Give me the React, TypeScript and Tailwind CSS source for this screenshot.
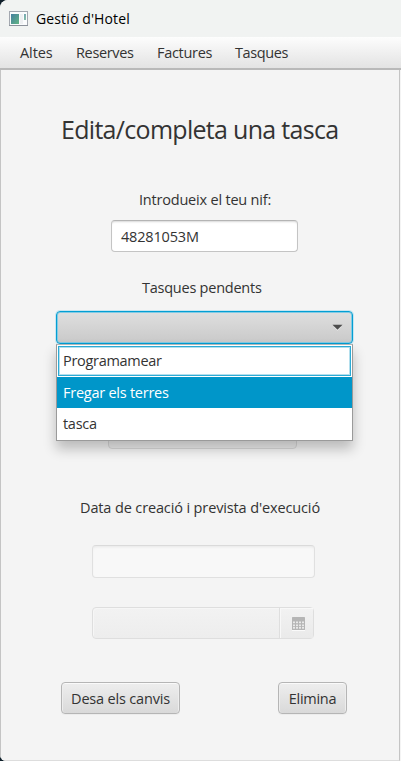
import React from "react";

const menus = [
  { label: "Altes", className: "w-[56px] tracking-[-0.1px]" },
  { label: "Reserves", className: "w-[81px] tracking-[-0.35px]" },
  { label: "Factures", className: "w-[78px] tracking-[-0.3px]" },
  { label: "Tasques", className: "tracking-[-0.4px]" },
];

function WindowIcon() {
  return (
    <svg width="19" height="16" viewBox="0 0 19 16" shapeRendering="crispEdges">
      <defs>
        <linearGradient id="pane" x1="0" y1="0" x2="1" y2="1">
          <stop offset="0" stopColor="#4580a0" />
          <stop offset="1" stopColor="#62b584" />
        </linearGradient>
      </defs>
      <rect x="0.5" y="0.5" width="18" height="14" fill="#fbfcfd" stroke="#a3a8b0" />
      <rect x="0" y="14" width="19" height="1" fill="#8c929b" />
      <rect x="2" y="3" width="8" height="10" fill="url(#pane)" />
      <rect x="11" y="3" width="3" height="10" fill="#eef0f2" />
      <rect x="15" y="3" width="2" height="6" fill="url(#pane)" opacity="0.75" />
    </svg>
  );
}

function CalendarIcon() {
  const cols = [1.5, 4.5, 7.5, 10.5];
  const rows = [4.5, 7.5, 10];
  return (
    <svg width="13" height="14" viewBox="0 0 13 14">
      <rect x="0" y="1" width="13" height="13" fill="#fafafa" />
      <rect x="0" y="0" width="13" height="13" rx="0.6" fill="#b5b5b5" />
      {rows.map((y) =>
        cols.map((x) => <rect key={`${x}-${y}`} x={x - 0.5} y={y} width="2" height="1.7" fill="#e9e9e9" />)
      )}
    </svg>
  );
}

function Button({ children, className }: { children: React.ReactNode; className: string }) {
  return (
    <button
      className={`h-8 rounded-[4px] border border-[#b5b5b5] bg-linear-to-b from-[#eeeeee] to-[#d9d9d9] pt-px text-center leading-[30px] whitespace-nowrap shadow-[inset_0_1px_0_#fafafa,inset_1px_0_0_#ededed,inset_-1px_0_0_#ededed,0_1px_0_#ececec] ${className}`}
    >
      {children}
    </button>
  );
}

export default function App() {
  return (
    <div className="h-[761px] w-[401px] overflow-hidden bg-[#10202b] font-['Open_Sans','Noto_Sans',sans-serif] text-[14.5px] text-[#333333]">
      <div className="flex h-[761px] flex-col overflow-hidden rounded-tl-[8px] rounded-bl-[6px] bg-[#f4f4f4]">
        <header className="flex h-[37px] shrink-0 items-center bg-[#f1f3f2] pl-[9px] text-black">
          <WindowIcon />
          <span className="ml-2 text-[14px] leading-[36px] tracking-[0.13px] whitespace-nowrap">Gestió d'Hotel</span>
        </header>
        <nav className="flex h-[33px] shrink-0 border-b-2 border-[#b9b9b9] bg-linear-to-b from-[#fdfdfd] to-[#e3e3e3] pl-5 leading-[31px]">
          {menus.map((m) => (
            <span key={m.label} className={m.className}>{m.label}</span>
          ))}
        </nav>
        <main className="mr-px flex flex-1 flex-col border-x border-b border-x-[#c4c4c4] border-b-[#dddddd]">
          <h1 className="mt-[39px] ml-[60px] h-[41px] text-[25px] leading-10 tracking-[-0.7px] whitespace-nowrap">Edita/completa una tasca</h1>
          <label className="mt-10 ml-[138px] h-5 leading-5 tracking-[-0.2px] whitespace-nowrap">Introdueix el teu nif:</label>
          <div className="mt-[10px] ml-[110px] h-8 w-[187px] rounded-[4px] border border-[#c4c4c4] border-t-[#b4b4b4] bg-white pt-px pl-[9px] leading-[30px] tracking-[-0.17px] shadow-[inset_0_2px_2px_-1px_#d8d8d8]">48281053M</div>
          <label className="mt-[26px] ml-[141px] h-5 leading-5 tracking-[-0.24px] whitespace-nowrap">Tasques pendents</label>

          <div className="relative mt-[13px] ml-[55px] h-[33px] w-[297px]">
            <div className="flex h-full items-center justify-end rounded-[4px] border border-[#039ed3] bg-linear-to-b from-[#dfdfdf] to-[#c9c9c9] pr-[9px] shadow-[0_0_0_1px_#c7e6f1,inset_0_0_0_1px_#83cbe4]">
              <svg width="11" height="7" viewBox="0 0 11 7">
                <path d="M2 3 5.5 6.7 9 3Z" fill="#eeeeee" />
                <path d="M0.5 0.7H10.5L5.5 5.7Z" fill="#4d4d4d" />
              </svg>
            </div>
            <ul className="absolute top-[33px] left-0 z-10 h-[97px] w-[297px] border border-[#9a9a9a] border-t-[#b5b5b5] bg-white pt-px shadow-[0_8px_12px_0_rgba(0,0,0,0.24)]">
              <li className="mx-px h-[30px] border border-[#2cabd5] pl-1 leading-[28px] tracking-[-0.3px] shadow-[inset_0_0_0_1px_#b4dfed]">Programamear</li>
              <li className="mt-px h-[31px] bg-[#0096c9] pl-[6px] leading-[31px] tracking-[-0.25px] text-white">Fregar els terres</li>
              <li className="h-[31px] pl-[6px] leading-[31px] tracking-[-0.3px]">tasca</li>
            </ul>
          </div>

          <div className="mt-[73px] ml-[107px] h-8 w-[189px] rounded-[4px] border border-[#d9d9d9] bg-[#eeeeee]" />
          <label className="mt-[49px] ml-[79px] h-5 leading-5 tracking-[-0.13px] whitespace-nowrap">Data de creació i prevista d'execució</label>
          <div className="mt-[27px] ml-[91px] h-[33px] w-[223px] rounded-[4px] border border-[#e0e0e0] border-t-[#dadada] bg-[#f8f8f8] shadow-[inset_0_2px_3px_-1px_#e7e7e7]" />
          <div className="mt-[29px] ml-[91px] flex h-8 w-[222px] rounded-[4px] border border-[#dedede] bg-linear-to-b from-[#f2f2f2] to-[#ededed] shadow-[inset_1px_1px_0_#f6f6f6]">
            <div className="w-[186px]" />
            <div className="flex flex-1 items-center justify-center border-l border-[#dedede] bg-linear-to-b from-[#f2f2f2] to-[#eaeaea] pt-px pl-[3px] shadow-[inset_1px_1px_0_#f8f8f8]">
              <CalendarIcon />
            </div>
          </div>
          <div className="mt-[43px] ml-[60px] flex w-[286px] justify-between">
            <Button className="w-[119px] tracking-[-0.18px]">Desa els canvis</Button>
            <Button className="w-[69px] tracking-[-0.3px]">Elimina</Button>
          </div>
        </main>
      </div>
    </div>
  );
}
